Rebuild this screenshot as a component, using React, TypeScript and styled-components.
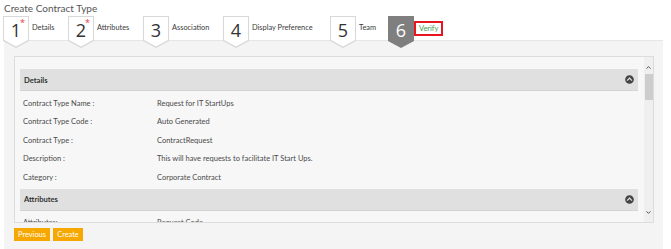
import styled, { createGlobalStyle } from "styled-components";
import { FaChevronCircleUp } from "react-icons/fa";
import { ChevronUp, ChevronDown } from "lucide-react";

const GlobalStyle = createGlobalStyle`
  * { box-sizing: border-box; }
  body {
    margin: 0;
    background: #fff;
    font-family: "Lato", "Open Sans", sans-serif;
    color: #555;
  }
`;

const Page = styled.div`
  width: 671px;
  height: 249px;
  overflow: hidden;
`;

const Title = styled.div`
  font-size: 10px;
  color: #555;
  padding: 2px 0 0 4px;
  height: 16px;
`;

const Steps = styled.div`
  display: flex;
  align-items: flex-start;
  padding-left: 3px;
  position: relative;
  z-index: 1;
  height: 33px;
`;

const Step = styled.div<{ $w: number }>`
  display: flex;
  align-items: flex-start;
  width: ${(p) => p.$w}px;
  flex: none;
`;

const Badge = styled.div<{ $active?: boolean }>`
  position: relative;
  width: 26px;
  height: 32px;
  display: flex;
  justify-content: center;
  padding-top: 4px;
  font-size: 18px;
  line-height: 20px;
  font-family: "Open Sans", sans-serif;
  color: ${(p) => (p.$active ? "#fff" : "#333")};

  &::before,
  &::after {
    content: "";
    position: absolute;
    inset: 0;
    clip-path: polygon(0 0, 100% 0, 100% 78%, 50% 100%, 0 78%);
    z-index: -1;
  }
  &::before {
    background: ${(p) => (p.$active ? "#7f7f7f" : "#d8d8d8")};
  }
  &::after {
    inset: 1px 1px 1.5px 1px;
    background: ${(p) => (p.$active ? "#7f7f7f" : "#fff")};
  }
`;

const Star = styled.span`
  position: absolute;
  top: 2px;
  right: 4px;
  font-size: 9px;
  line-height: 9px;
  color: #e53935;
`;

const StepLabel = styled.span<{ $current?: boolean }>`
  font-size: 7.4px;
  margin-top: 7px;
  margin-left: ${(p) => (p.$current ? 0 : 3)}px;
  color: ${(p) => (p.$current ? "#3f9a4e" : "#3a3a3a")};
  white-space: nowrap;
  ${(p) =>
    p.$current &&
    `
    border: 2px solid #e8141e;
    padding: 1px 3px;
    margin-top: 5px;
  `}
`;

const Body = styled.div`
  margin: -9px 8px 0 4px;
  background: #f4f4f4;
  border-top: 1px solid #e6e6e6;
  padding: 15px 9px 8px 10px;
  height: 218px;
`;

const Panel = styled.div`
  height: 167px;
  border: 1px solid #dcdcdc;
  background: #f7f7f7;
  display: flex;
`;

const Scroll = styled.div`
  flex: 1;
  overflow: hidden;
  padding: 12px 6px 0 5px;
`;

const SectionHead = styled.div`
  height: 22px;
  background: #e0e0e0;
  border-bottom: 1px solid #d4d4d4;
  display: flex;
  align-items: center;
  justify-content: space-between;
  padding: 0 4px 0 4px;
  font-size: 7.6px;
  font-weight: 700;
  color: #333;
`;

const Rows = styled.div`
  padding: 3px 0 2px 3px;
`;

const Row = styled.div`
  display: grid;
  grid-template-columns: 134px 1fr;
  height: 18.5px;
  align-items: center;
  font-size: 7.5px;
  color: #4a4a4a;
`;

const ScrollBar = styled.div`
  width: 9px;
  background: #efefef;
  display: flex;
  flex-direction: column;
  align-items: center;
  padding-top: 7px;
  color: #444;
`;

const Thumb = styled.div`
  width: 8px;
  height: 26px;
  margin-top: 3px;
  background: #cdcdcd;
`;

const Spacer = styled.div`
  flex: 1;
`;

const Footer = styled.div`
  display: flex;
  gap: 3px;
  margin-top: 5px;
`;

const Btn = styled.button<{ $w: number }>`
  width: ${(p) => p.$w}px;
  height: 13px;
  border: none;
  background: #f6a800;
  color: #fff;
  font-family: "Lato", sans-serif;
  font-size: 7.4px;
  padding: 0;
  line-height: 13px;
`;

const steps = [
  { n: 1, label: "Details", req: true, w: 65 },
  { n: 2, label: "Attributes", req: true, w: 75 },
  { n: 3, label: "Association", w: 80 },
  { n: 4, label: "Display Preference", w: 107 },
  { n: 5, label: "Team", w: 58 },
  { n: 6, label: "Verify", current: true, w: 70 },
];

const details = [
  ["Contract Type Name :", "Request for IT StartUps"],
  ["Contract Type Code :", "Auto Generated"],
  ["Contract Type :", "ContractRequest"],
  ["Description :", "This will have requests to facilitate IT Start Ups."],
  ["Category :", "Corporate Contract"],
];

export default function App() {
  return (
    <Page>
      <GlobalStyle />
      <Title>Create Contract Type</Title>
      <Steps>
        {steps.map((s) => (
          <Step key={s.n} $w={s.w}>
            <Badge $active={s.current}>
              {s.n}
              {s.req && <Star>*</Star>}
            </Badge>
            <StepLabel $current={s.current}>{s.label}</StepLabel>
          </Step>
        ))}
      </Steps>
      <Body>
        <Panel>
          <Scroll>
            <SectionHead>
              Details
              <FaChevronCircleUp size={9} color="#444" />
            </SectionHead>
            <Rows>
              {details.map(([k, v]) => (
                <Row key={k}>
                  <span>{k}</span>
                  <span>{v}</span>
                </Row>
              ))}
            </Rows>
            <SectionHead>
              Attributes
              <FaChevronCircleUp size={9} color="#444" />
            </SectionHead>
            <Rows>
              <Row>
                <span>Attributes:</span>
                <span>Request Code</span>
              </Row>
            </Rows>
          </Scroll>
          <ScrollBar>
            <ChevronUp size={7} strokeWidth={3} />
            <Thumb />
            <Spacer />
            <ChevronDown size={7} strokeWidth={3} style={{ marginBottom: 6 }} />
          </ScrollBar>
        </Panel>
        <Footer>
          <Btn $w={36}>Previous</Btn>
          <Btn $w={30}>Create</Btn>
        </Footer>
      </Body>
    </Page>
  );
}
